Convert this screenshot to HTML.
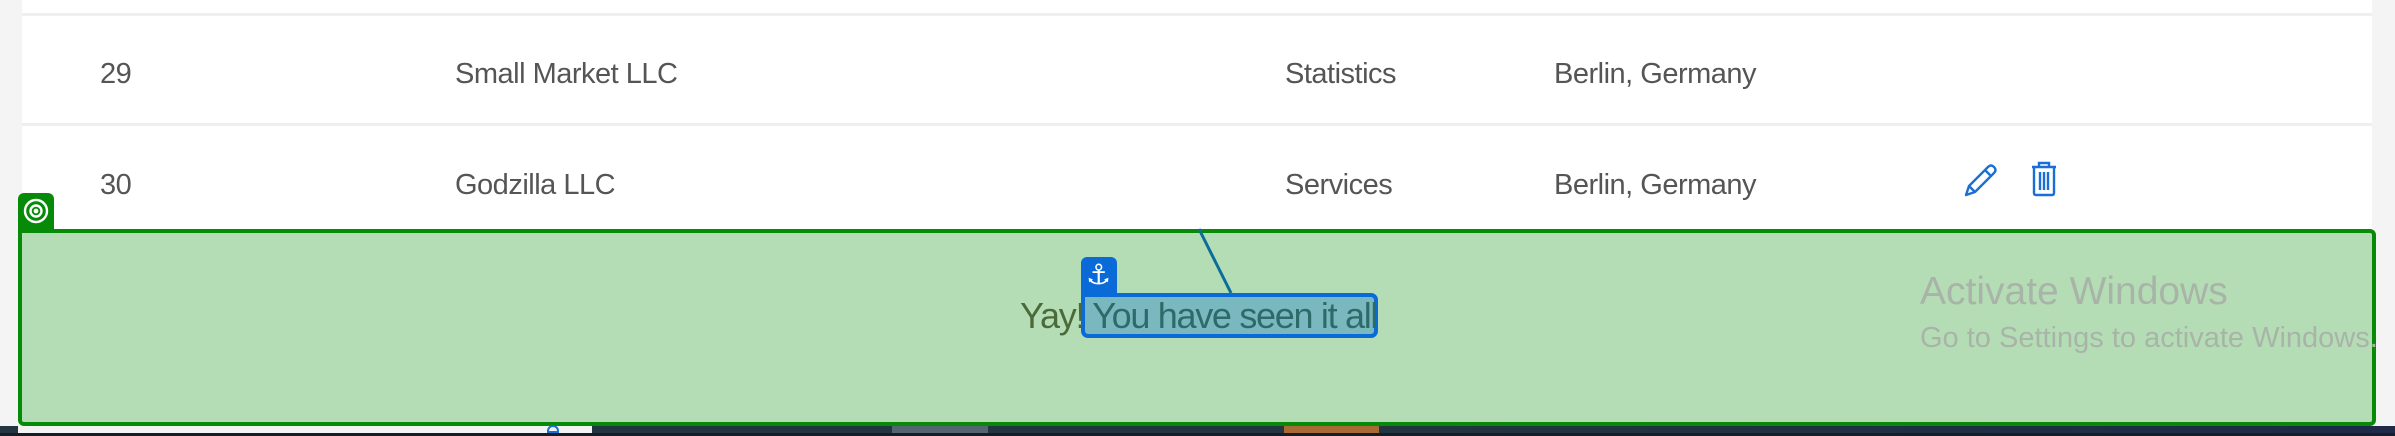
<!DOCTYPE html>
<html><head><meta charset="utf-8"><style>
*{margin:0;padding:0;box-sizing:border-box}
body{width:2395px;height:436px;background:#f4f4f4;position:relative;overflow:hidden;font-family:"Liberation Sans",sans-serif}
.abs{position:absolute}
.main{left:22px;top:0;width:2350px;height:426px;background:#fff}
.line{left:22px;width:2350px;height:3px;background:#efefef}
.t{position:absolute;font-size:29px;color:#555;letter-spacing:-0.5px;line-height:1;white-space:nowrap}
</style></head><body>
<div class="abs main"></div>
<div class="abs line" style="top:13px"></div>
<div class="abs line" style="top:123px"></div>
<div class="t" style="left:100px;top:60px">29</div>
<div class="t" style="left:455px;top:60px">Small Market LLC</div>
<div class="t" style="left:1285px;top:60px">Statistics</div>
<div class="t" style="left:1554px;top:60px">Berlin, Germany</div>
<div class="t" style="left:100px;top:171px">30</div>
<div class="t" style="left:455px;top:171px">Godzilla LLC</div>
<div class="t" style="left:1285px;top:171px">Services</div>
<div class="t" style="left:1554px;top:171px">Berlin, Germany</div>
<svg class="abs" style="left:1960px;top:160px" width="40" height="40" viewBox="0 0 40 40" fill="none" stroke="#1a6fd6" stroke-width="2.4" stroke-linejoin="round">
<path d="M6 35 L9 26 L28 7 Q31 4 34 7 Q37 10 34 13 L15 32 Z M9 26 L15 32 M25 10 L31 16"/></svg>
<svg class="abs" style="left:2030px;top:161px" width="28" height="36" viewBox="0 0 28 36" fill="none" stroke="#1a6fd6" stroke-width="2.4">
<path d="M2 6 H26 M9 6 V2 H19 V6 M4 6 V32 Q4 34 6 34 H22 Q24 34 24 32 V6 M10 11 V29 M14 11 V29 M18 11 V29"/></svg>
<!-- green box -->
<div class="abs" style="left:18px;top:193px;width:36px;height:40px;background:#078a07;border-radius:6px 6px 0 0"></div>
<svg class="abs" style="left:18px;top:193px" width="36" height="36" viewBox="0 0 36 36" fill="none" stroke="#fff" stroke-width="2.4"><circle cx="18" cy="18" r="11"/><circle cx="18" cy="18" r="5.5"/><circle cx="18" cy="18" r="1.2" fill="#fff"/></svg>
<div class="abs" style="left:18px;top:229px;width:2358px;height:197px;background:#b5ddb5;border:4px solid #078a07;border-radius:0 6px 6px 6px"></div>
<svg class="abs" style="left:0;top:0" width="2395" height="436"><line x1="1199" y1="229" x2="1231" y2="293" stroke="#0a6e9a" stroke-width="3"/></svg>
<div class="abs" style="left:1081px;top:257px;width:36px;height:40px;background:#0a6ad8;border-radius:6px 6px 0 0"></div>
<div class="abs" style="left:1086px;top:258px;color:#fff;font-size:28px;font-family:'DejaVu Sans',sans-serif;line-height:34px">⚓</div>
<div class="abs" style="left:1081px;top:293px;width:297px;height:45px;background:#7ab8c0;border:4px solid #0a6ad8;border-radius:0 7px 7px 7px"></div>
<div class="abs" style="left:1020px;top:294px;font-size:36px;line-height:44px;letter-spacing:-1.3px;white-space:nowrap"><span style="color:#4a6a3a">Yay!</span><span style="color:#2e6a6a"> You have seen it all</span></div>
<div class="abs" style="left:1920px;top:270px;font-size:39px;color:#a8b4a8;white-space:nowrap">Activate Windows</div>
<div class="abs" style="left:1920px;top:322px;font-size:29px;color:#a8b4a8;white-space:nowrap">Go to Settings to activate Windows.</div>
<!-- taskbar -->
<div class="abs" style="left:0;top:426px;width:2395px;height:10px;background:linear-gradient(90deg,#233540 0%,#233540 60%,#1e2a48 100%)"></div>
<div class="abs" style="left:18px;top:426px;width:574px;height:7px;background:#f3f3f3"></div>
<div class="abs" style="left:892px;top:426px;width:96px;height:8px;background:#546470"></div>
<div class="abs" style="left:1284px;top:426px;width:95px;height:10px;background:#a86a35"></div>
<div class="abs" style="left:0;top:433px;width:2395px;height:3px;background:#151e26"></div>
<div class="abs" style="left:547px;top:425px;width:12px;height:8px;border:2px solid #1a6fd6;border-radius:6px 6px 0 0"></div>
</body></html>
